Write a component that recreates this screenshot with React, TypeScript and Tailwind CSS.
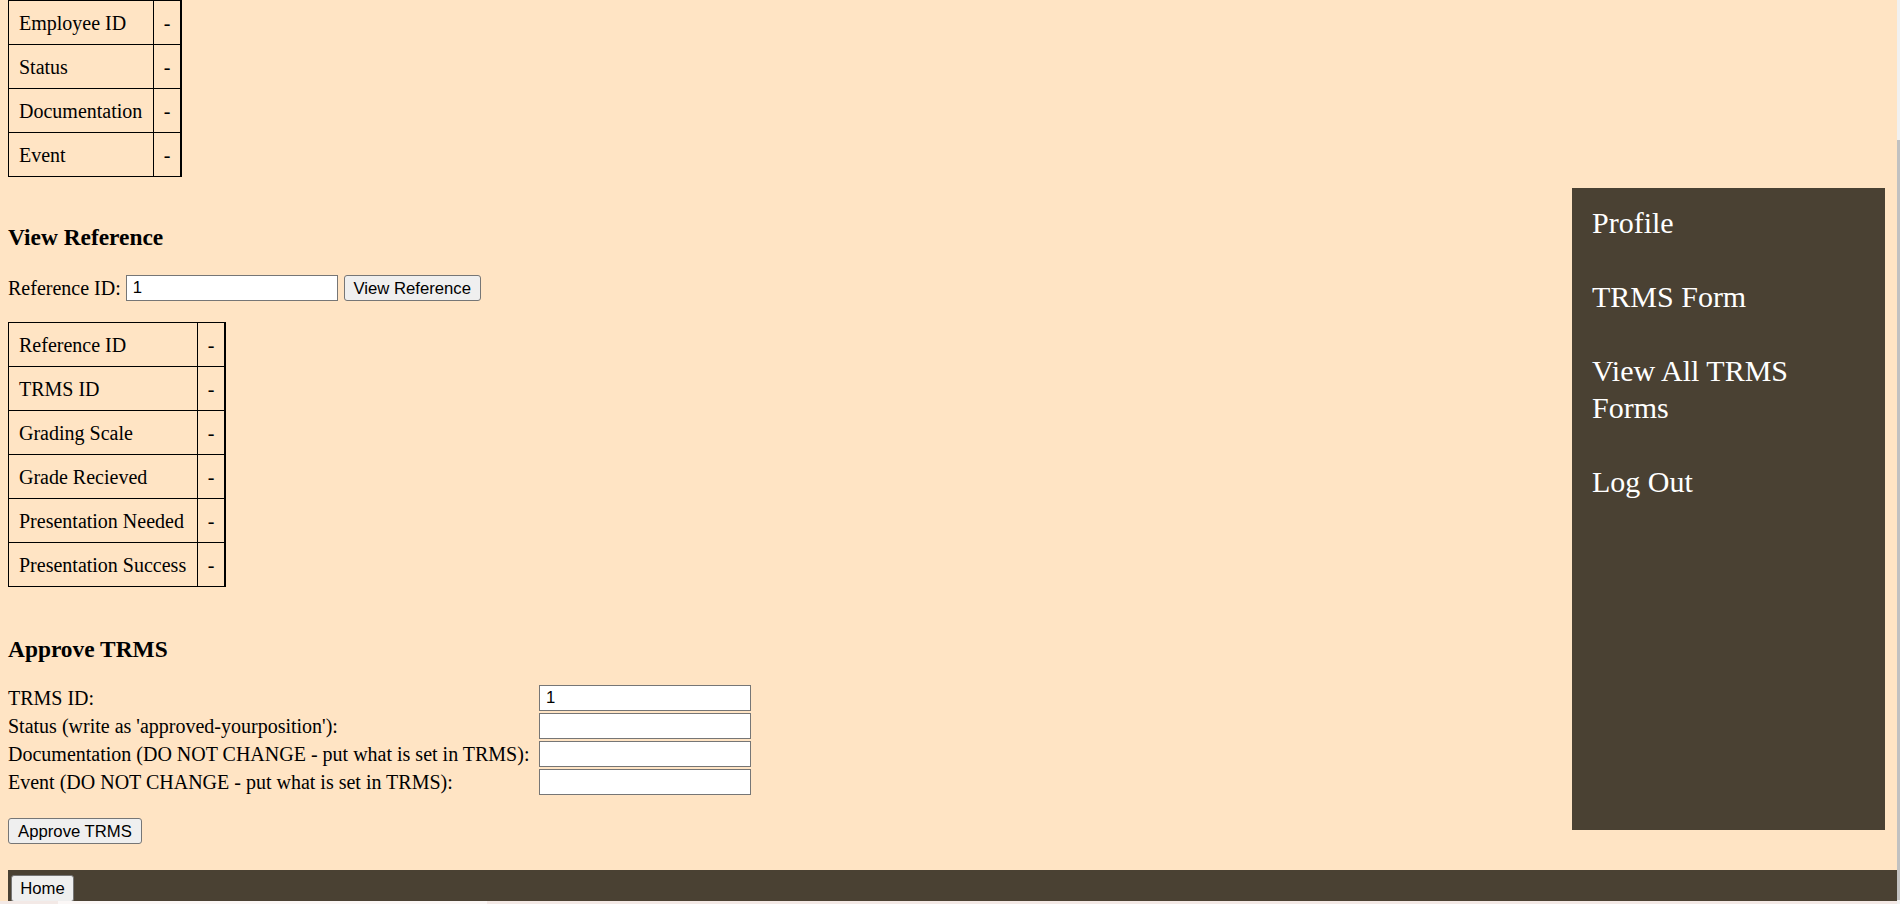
import React from "react";

const empRows = ["Employee ID", "Status", "Documentation", "Event"];
const refRows = [
  "Reference ID",
  "TRMS ID",
  "Grading Scale",
  "Grade Recieved",
  "Presentation Needed",
  "Presentation Success",
];
const approveRows = [
  { label: "TRMS ID:", value: "1" },
  { label: "Status (write as 'approved-yourposition'):", value: "" },
  { label: "Documentation (DO NOT CHANGE - put what is set in TRMS):", value: "" },
  { label: "Event (DO NOT CHANGE - put what is set in TRMS):", value: "" },
];

const serif = "font-['Liberation_Serif','Times_New_Roman',serif]";
const sans = "font-['Liberation_Sans',Arial,sans-serif]";

const InfoTable: React.FC<{ rows: string[]; labelWidth: string }> = ({ rows, labelWidth }) => (
  <div className="w-fit border-l border-t border-black">
    {rows.map((r) => (
      <div key={r} className="flex">
        <div className={`${labelWidth} h-[44px] border-r border-b border-black pl-[10px] pt-[2px] flex items-center leading-[23px]`}>
          {r}
        </div>
        <div className="w-[28px] h-[44px] border-r-2 border-b border-black pt-[2px] flex items-center justify-center leading-[23px]">
          -
        </div>
      </div>
    ))}
  </div>
);

const App: React.FC = () => {
  return (
    <div className={`flex h-[904px] w-[1900px] overflow-hidden bg-[#ffe4c4] text-[20px] text-black ${serif}`}>
      <div className="flex w-[1897px] flex-col">
        <div className="flex h-[870px]">
          <div className="flex-1 pl-[8px]">
            <InfoTable rows={empRows} labelWidth="w-[145px]" />

            <h3 className="mt-[47px] text-[23.4px] font-bold leading-[27px]">View Reference</h3>
            <div className="mt-[24px] flex items-center h-[26px]">
              <span className="leading-[23px] pt-[1px]">Reference ID:</span>
              <input
                defaultValue="1"
                className={`ml-[5px] h-[26px] w-[212px] border border-[#767676] bg-white pl-[6px] text-[16.7px] ${sans} outline-none`}
              />
              <button className={`ml-[6px] h-[26px] w-[137px] rounded-[3px] border border-[#767676] bg-[#efefef] text-[16.7px] ${sans}`}>
                View Reference
              </button>
            </div>

            <div className="mt-[21px]">
              <InfoTable rows={refRows} labelWidth="w-[189px]" />
            </div>

            <h3 className="mt-[49px] text-[23.4px] font-bold leading-[27px]">Approve TRMS</h3>
            <div className="mt-[22px] grid grid-cols-[531px_212px] gap-y-[2px]">
              {approveRows.map((row) => (
                <React.Fragment key={row.label}>
                  <div className="flex h-[26px] items-center pt-[1px] leading-[23px]">{row.label}</div>
                  <input
                    defaultValue={row.value}
                    className={`h-[26px] w-[212px] border border-[#767676] bg-white pl-[6px] text-[16.7px] ${sans} outline-none`}
                  />
                </React.Fragment>
              ))}
            </div>
            <button className={`mt-[23px] h-[26px] w-[134px] rounded-[3px] border border-[#767676] bg-[#efefef] text-[16.7px] ${sans}`}>
              Approve TRMS
            </button>
          </div>

          <nav className="mr-[12px] mt-[188px] h-[642px] w-[313px] bg-[#4a4133] px-[20px] pt-[16px] text-[30px] leading-[37px] text-white">
            <div className="mb-[37px]">Profile</div>
            <div className="mb-[37px]">TRMS Form</div>
            <div className="mb-[37px]">View All TRMS Forms</div>
            <div>Log Out</div>
          </nav>
        </div>

        <footer className="ml-[8px] h-[31px] bg-[#4a4133] pl-[3px] pt-[2px]">
          <button className={`h-[27px] w-[63px] rounded-[3px] border border-[#767676] bg-[#efefef] text-[16.7px] ${sans}`}>
            Home
          </button>
        </footer>
        <div className="mt-auto h-[3px] bg-[#f3e9e6] pl-[58px]">
          <div className="h-[3px] w-[429px] bg-[#fbf7f6]" />
        </div>
      </div>
      <div className="flex w-[3px] flex-col bg-[#f1f1f1]">
        <div className="mt-[140px] h-[760px] bg-[#c1c1c1]" />
      </div>
    </div>
  );
};

export default App;
